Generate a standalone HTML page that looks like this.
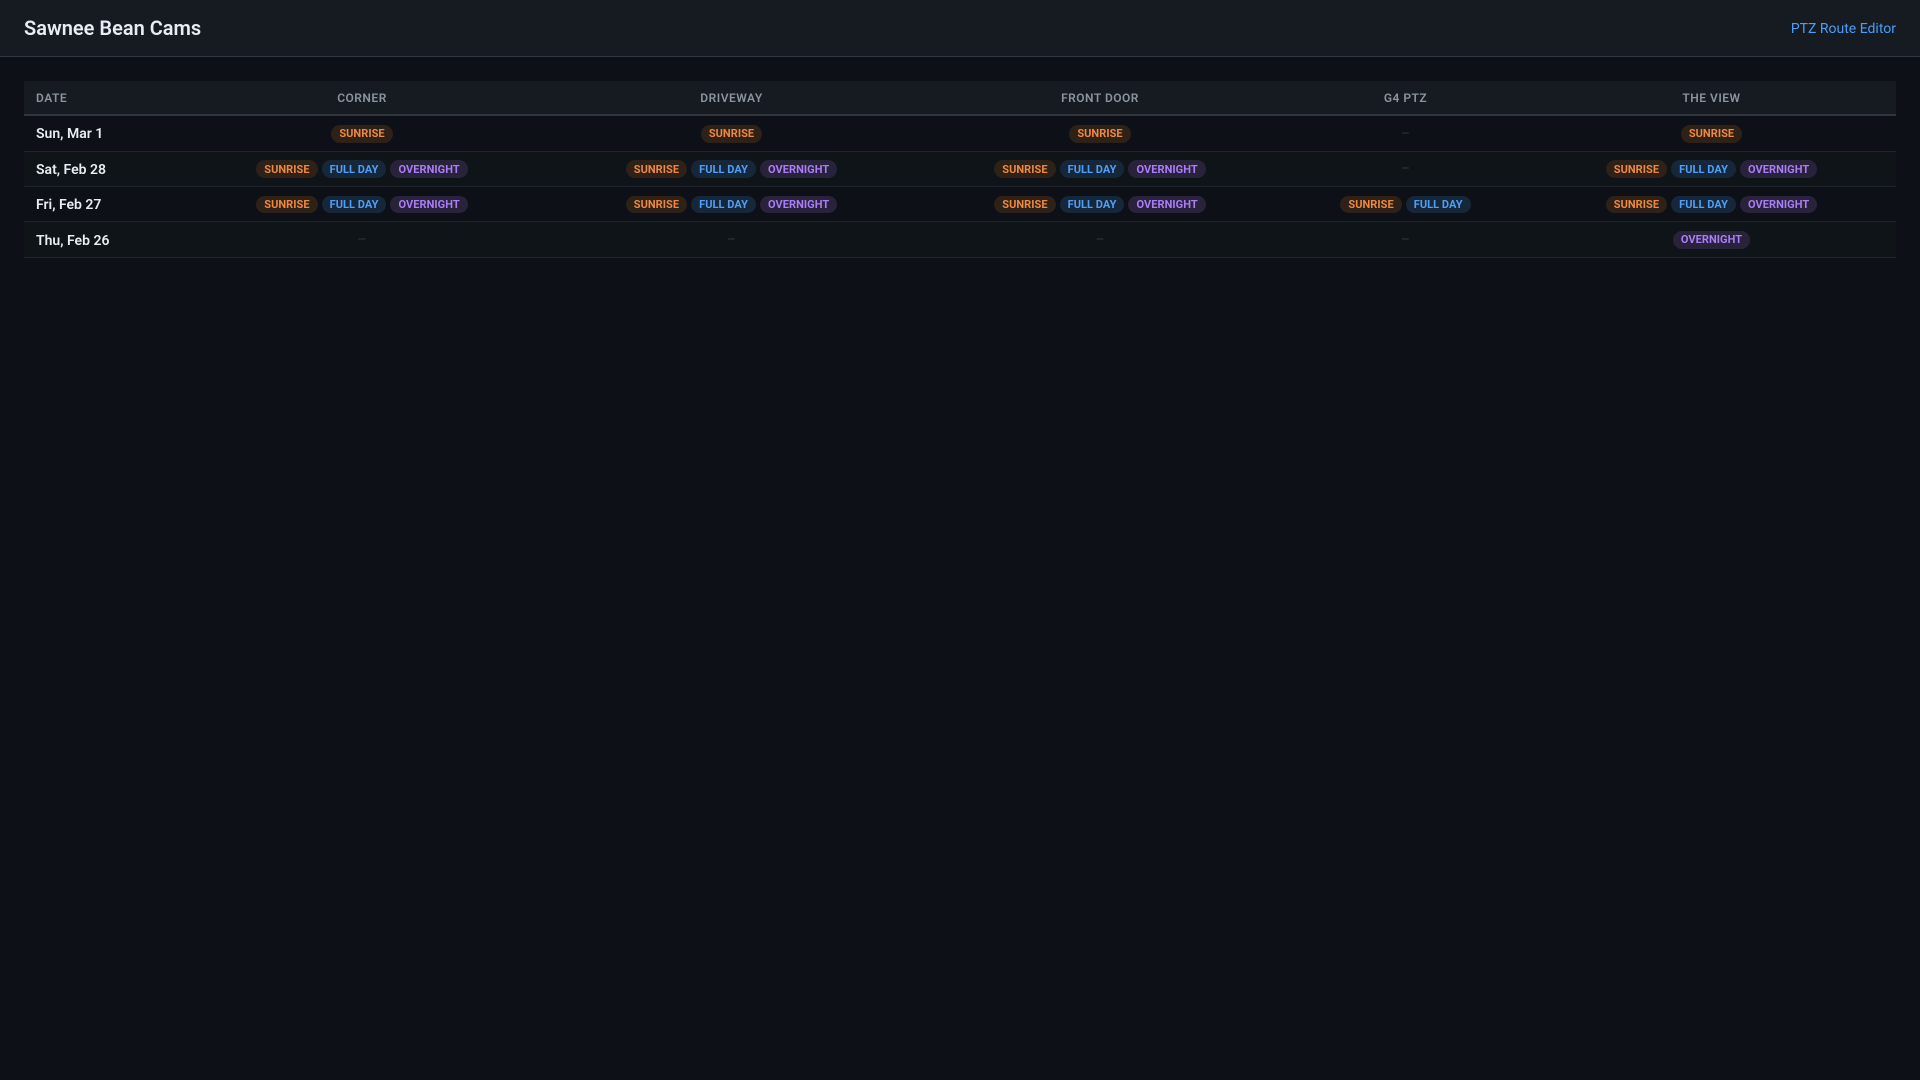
<!DOCTYPE html>
<html lang="en"><head><meta charset="utf-8"><title>Sawnee Bean Cams</title>
<style>
*{box-sizing:border-box}
html,body{margin:0;padding:0;background:#0d1117;width:1920px;height:1080px;overflow:hidden}
body{font-family:Roboto,"Liberation Sans",sans-serif;color:#e6edf3;font-size:14px}
header{height:57px;background:#161b22;border-bottom:1px solid #30363d;display:flex;align-items:center;justify-content:space-between;padding:0 24px}
h1{margin:0;font-size:20px;font-weight:600;color:#e6edf3}
header a{color:#4a9ef8;font-size:14px;text-decoration:none;position:relative;top:1px}
main{padding:24px}
table{width:1872px;border-collapse:separate;border-spacing:0;table-layout:fixed}
th{background:#161b22;color:#8b949e;font-size:12px;font-weight:600;letter-spacing:.5px;text-transform:uppercase;height:35px;padding:0 12px;text-align:center;border-bottom:2px solid #30363d}
th:first-child,td:first-child{text-align:left}
td{padding:0 12px;text-align:center;border-bottom:1px solid #21262d;white-space:nowrap;font-size:14px}
td:first-child{font-weight:600;color:#e6edf3}
td b{font-weight:600;position:relative}
.r2 b,.r3 b,.r4 b{top:1px}
tr:nth-child(even) td{background:#0f1419}
.r1 td{height:36px}.r2 td{height:35px}.r3 td{height:35px}.r4 td{height:36px}
td.c{vertical-align:top;line-height:0}
.r1 td.c,.r3 td.c,.r4 td.c{padding-top:9px}
.r2 td.c{padding-top:8px}
.p{display:inline-block;font-size:11px;font-weight:700;letter-spacing:.05px;padding:0 8px;border-radius:10px;height:18px;line-height:18px;margin:0 2px;vertical-align:top}
.r2 .p{line-height:19px}
.r3 .p{height:17px;line-height:17px}
.s{color:#f0883e;background:#2d2118}
.f{color:#4f9ff8;background:#17273a}
.o{color:#ab7df8;background:#28233b}
.n{color:#30363d}
</style></head><body>
<header><h1>Sawnee Bean Cams</h1><a href="#">PTZ Route Editor</a></header>
<main><table>
<colgroup><col style="width:153px"><col style="width:370px"><col style="width:369px"><col style="width:368px"><col style="width:243px"><col style="width:369px"></colgroup>
<thead><tr><th>Date</th><th>Corner</th><th>Driveway</th><th>Front Door</th><th>G4 PTZ</th><th>The View</th></tr></thead>
<tbody>
<tr class="r1"><td><b>Sun, Mar 1</b></td><td class="c"><span class="p s">SUNRISE</span></td><td class="c"><span class="p s">SUNRISE</span></td><td class="c"><span class="p s">SUNRISE</span></td><td><span class="n">–</span></td><td class="c"><span class="p s">SUNRISE</span></td></tr>
<tr class="r2"><td><b>Sat, Feb 28</b></td><td class="c"><span class="p s">SUNRISE</span><span class="p f">FULL DAY</span><span class="p o">OVERNIGHT</span></td><td class="c"><span class="p s">SUNRISE</span><span class="p f">FULL DAY</span><span class="p o">OVERNIGHT</span></td><td class="c"><span class="p s">SUNRISE</span><span class="p f">FULL DAY</span><span class="p o">OVERNIGHT</span></td><td><span class="n">–</span></td><td class="c"><span class="p s">SUNRISE</span><span class="p f">FULL DAY</span><span class="p o">OVERNIGHT</span></td></tr>
<tr class="r3"><td><b>Fri, Feb 27</b></td><td class="c"><span class="p s">SUNRISE</span><span class="p f">FULL DAY</span><span class="p o">OVERNIGHT</span></td><td class="c"><span class="p s">SUNRISE</span><span class="p f">FULL DAY</span><span class="p o">OVERNIGHT</span></td><td class="c"><span class="p s">SUNRISE</span><span class="p f">FULL DAY</span><span class="p o">OVERNIGHT</span></td><td class="c"><span class="p s">SUNRISE</span><span class="p f">FULL DAY</span></td><td class="c"><span class="p s">SUNRISE</span><span class="p f">FULL DAY</span><span class="p o">OVERNIGHT</span></td></tr>
<tr class="r4"><td><b>Thu, Feb 26</b></td><td><span class="n">–</span></td><td><span class="n">–</span></td><td><span class="n">–</span></td><td><span class="n">–</span></td><td class="c"><span class="p o">OVERNIGHT</span></td></tr>
</tbody></table></main>
</body></html>
